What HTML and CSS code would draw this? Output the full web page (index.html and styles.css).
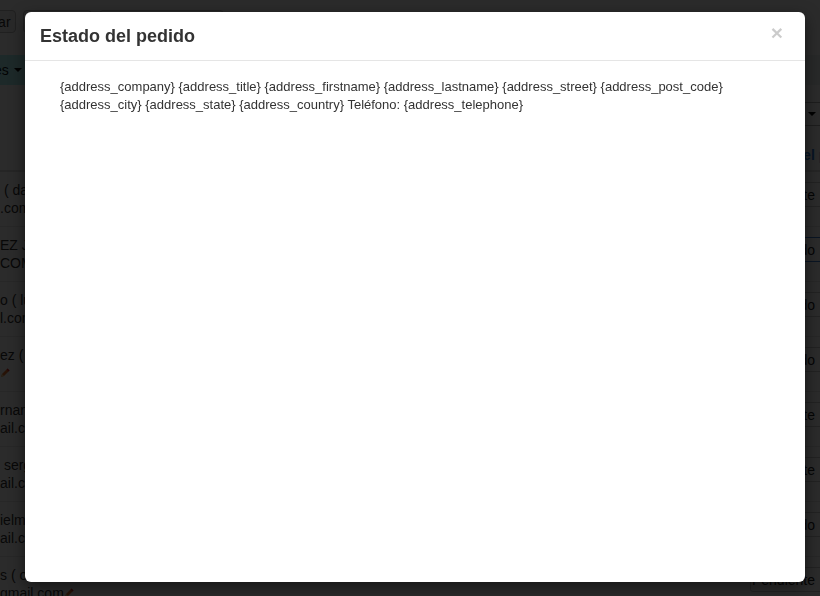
FILE: index.html
```html
<!DOCTYPE html>
<html lang="es">
<head>
<meta charset="utf-8">
<title>Estado del pedido</title>
<link rel="stylesheet" href="styles.css">
</head>
<body>
<div class="page">
  <div class="toolbar">
    <span class="btn btn-search">Buscar</span>
    <span class="btn btn-clear">Limpiar</span>
    <span class="btn btn-export">Exportar pedidos</span>
  </div>
  <div class="actions">
    <span class="btn-teal">Acciones <span class="caret"></span></span>
  </div>
  <div class="filter">
    <span class="select">Todos los estados <span class="caret dark"></span></span>
  </div>
  <div class="thead">
    <span class="th-title">Estado del pedido</span>
  </div>
  <div class="rows">
    <div class="row">
      <div class="cust"><span>&nbsp;( daniel.gomez@gmail</span><span class="l2">.com )</span></div>
      <span class="state">Pendiente</span>
    </div>
    <div class="row">
      <div class="cust"><span>EZ JIMENEZ ( JUAN@HOTMAIL</span><span class="l2">COM )</span></div>
      <span class="state active">Entregado</span>
    </div>
    <div class="row">
      <div class="cust"><span>o ( luis.perez@gmail</span><span class="l2">l.com )</span></div>
      <span class="state">Entregado</span>
    </div>
    <div class="row">
      <div class="cust"><span>ez ( maria@gmail.com )</span><span class="l2"><svg class="pencil" viewBox="0 0 10 10" width="10" height="10"><path d="M1 9 L2 6 L7.5 0.5 L9.5 2.5 L4 8 Z" fill="#e8742c"/><path d="M7.5 0.5 L9.5 2.5 L8.6 3.4 L6.6 1.4 Z" fill="#d9232a"/><path d="M1 9 L2 6 L4 8 Z" fill="#f3c98b"/></svg></span></div>
      <span class="state">Entregado</span>
    </div>
    <div class="row">
      <div class="cust"><span>rnando ( fernando@gm</span><span class="l2">ail.com )</span></div>
      <span class="state">Pendiente</span>
    </div>
    <div class="row">
      <div class="cust"><span>&nbsp;sergio ( sergio@gm</span><span class="l2">ail.com )</span></div>
      <span class="state">Pendiente</span>
    </div>
    <div class="row">
      <div class="cust"><span>ielmx ( daniel@gm</span><span class="l2">ail.com )</span></div>
      <span class="state">Entregado</span>
    </div>
    <div class="row">
      <div class="cust"><span>s ( oscar.ruiz@</span><span class="l2">gmail.com<svg class="pencil" viewBox="0 0 10 10" width="10" height="10"><path d="M1 9 L2 6 L7.5 0.5 L9.5 2.5 L4 8 Z" fill="#e8742c"/><path d="M7.5 0.5 L9.5 2.5 L8.6 3.4 L6.6 1.4 Z" fill="#d9232a"/><path d="M1 9 L2 6 L4 8 Z" fill="#f3c98b"/></svg></span></div>
      <span class="state">Pendiente</span>
    </div>
  </div>
</div>

<div class="backdrop"></div>

<div class="modal">
  <div class="modal-header">
    <h4 class="modal-title">Estado del pedido</h4>
    <span class="close">×</span>
  </div>
  <div class="modal-body">
    <p class="address">{address_company} {address_title} {address_firstname} {address_lastname} {address_street} {address_post_code}<br>{address_city} {address_state} {address_country} Teléfono: {address_telephone}</p>
  </div>
</div>
</body>
</html>
```

FILE: styles.css
```css
* { box-sizing: border-box; }

html, body {
  margin: 0;
  padding: 0;
  width: 820px;
  height: 596px;
  overflow: hidden;
  background: #ffffff;
  font-family: "Liberation Sans", Arial, sans-serif;
  font-size: 14px;
  color: #333;
}

/* ---------- underlying page ---------- */
.page {
  width: 820px;
  height: 596px;
  overflow: hidden;
}

.toolbar {
  display: flex;
  gap: 7px;
  margin-top: 10px;
  margin-left: -40px;
  height: 24px;
}

.btn {
  display: inline-flex;
  align-items: center;
  height: 23px;
  padding: 0 6px;
  border: 1px solid #bbb;
  border-radius: 4px;
  background: #f4f4f4;
  font-size: 14px;
  white-space: nowrap;
}
.btn-search { width: 56px; }
.btn-clear { width: 69px; }
.btn-export { width: 125px; }

.actions {
  margin-top: 21px;
  height: 30px;
  background: #e9f2f2;
  display: flex;
}

.btn-teal {
  display: inline-flex;
  align-items: center;
  gap: 3px;
  height: 30px;
  margin-left: -56px;
  padding: 0 4px 0 8px;
  background: #a9f0f4;
  color: #111;
  font-size: 14px;
  white-space: nowrap;
}

.caret {
  display: inline-block;
  width: 0;
  height: 0;
  border-left: 4px solid transparent;
  border-right: 4px solid transparent;
  border-top: 4px solid #000;
  margin-left: 2px;
}

.filter {
  margin-top: 17px;
  height: 23px;
  display: flex;
  justify-content: flex-end;
}

.select {
  display: inline-flex;
  align-items: center;
  justify-content: space-between;
  width: 150px;
  height: 24px;
  margin-right: -13px;
  padding: 0 16px 0 8px;
  border: 1px solid #aaa;
  border-radius: 4px;
  background: #fff;
  font-size: 13px;
  white-space: nowrap;
}

.thead {
  margin-top: 15px;
  height: 32px;
  border-bottom: 2px solid #ddd;
  display: flex;
  justify-content: flex-end;
  align-items: center;
}

.th-title {
  font-weight: bold;
  font-size: 14px;
  color: #2a7ad4;
  width: 76px;
  white-space: nowrap;
}

.rows {
  display: flex;
  flex-direction: column;
}

.row {
  height: 55px;
  border-bottom: 1px solid #e4e4e4;
  display: flex;
  justify-content: space-between;
  align-items: flex-start;
}

.cust {
  display: flex;
  flex-direction: column;
  padding-top: 9px;
  line-height: 18px;
  font-size: 14px;
  color: #333;
  white-space: nowrap;
}

.l2 {
  display: flex;
  align-items: center;
  height: 18px;
}

.pencil {
  display: block;
  margin-left: 0;
}

.state {
  display: inline-flex;
  align-items: center;
  height: 25px;
  width: 74px;
  margin-top: 10px;
  margin-right: -4px;
  padding: 0 8px 0 6px;
  border: 1px solid #c8c8c8;
  border-radius: 3px;
  background: #fff;
  font-size: 14px;
  color: #222;
  white-space: nowrap;
  justify-content: flex-end;
}
.state.active {
  border-color: #3f7fd0;
}

/* ---------- backdrop ---------- */
.backdrop {
  position: fixed;
  inset: 0;
  background: rgba(0, 0, 0, 0.83);
}

/* ---------- modal ---------- */
.modal {
  position: absolute;
  top: 12px;
  left: 25px;
  width: 780px;
  height: 570px;
  background: #fff;
  border-radius: 6px;
  box-shadow: 0 5px 15px rgba(0, 0, 0, 0.5);
  overflow: hidden;
}

.modal-header {
  display: flex;
  align-items: flex-start;
  justify-content: space-between;
  padding: 13px 22px 14px 15px;
  height: 49px;
  border-bottom: 1px solid #e5e5e5;
}

.modal-title {
  margin: 0;
  padding-top: 1px;
  font-family: "Liberation Sans", Arial, sans-serif;
  font-size: 18px;
  line-height: 20px;
  font-weight: bold;
  color: #333;
}

.close {
  font-size: 21px;
  font-weight: bold;
  line-height: 16px;
  color: #000;
  opacity: 0.2;
}

.modal-body {
  padding: 17px 15px 15px 35px;
}

.address {
  margin: 0;
  font-size: 13px;
  line-height: 18px;
  color: #333;
}
```
